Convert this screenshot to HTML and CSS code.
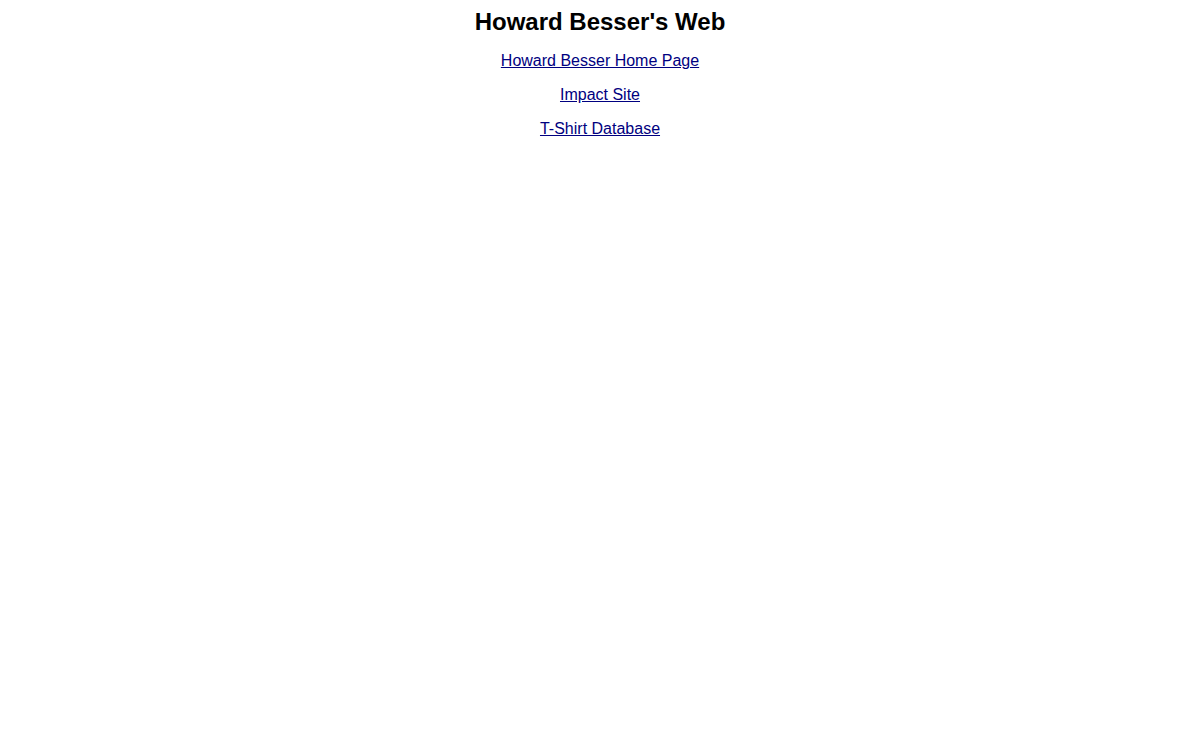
FILE: index.html
```html
<!DOCTYPE html>
<html>
<head>
<meta charset="utf-8">
<title>Howard Besser's Web</title>
<link rel="stylesheet" href="styles.css">
</head>
<body>
<div class="page">
<h1 class="title">Howard Besser's Web</h1>
<p class="item"><a class="link" href="#">Howard Besser Home Page</a></p>
<p class="item"><a class="link" href="#">Impact Site</a></p>
<p class="item"><a class="link" href="#">T-Shirt Database</a></p>
</div>
</body>
</html>
```
FILE: styles.css
```css
body {
  margin: 8px;
  background: #ffffff;
  font-family: "Liberation Sans", Arial, sans-serif;
  color: #000000;
}
.page {
  text-align: center;
}
.title {
  font-size: 24px;
  font-weight: bold;
  margin: 0 0 16px 0;
}
.item {
  font-size: 16px;
  margin: 16px 0;
}
.link {
  color: #000080;
}
```
